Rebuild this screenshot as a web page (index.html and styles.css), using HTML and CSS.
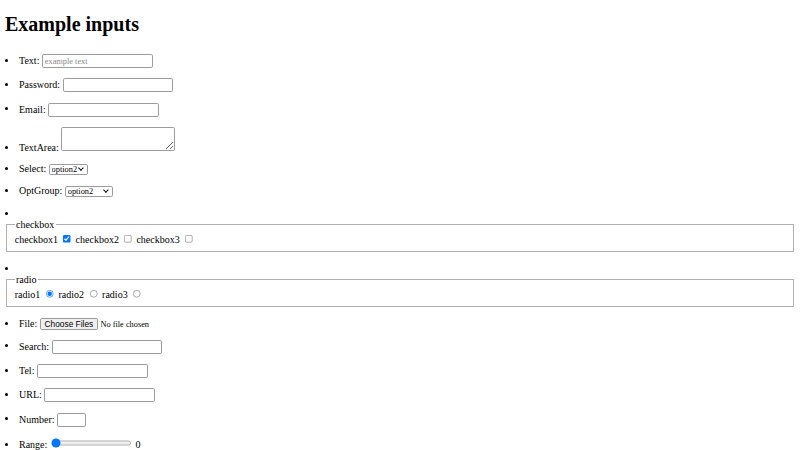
FILE: index.html
```html
<!DOCTYPE html>
<html lang="en">
<head>
<meta charset="utf-8">
<title>Example inputs</title>
<link rel="stylesheet" href="styles.css">
</head>
<body>
<h1>Example inputs</h1>
<ul class="inputs">
  <li>Text: <input class="field" type="text" placeholder="example text"></li>
  <li>Password: <input class="field" type="password"></li>
  <li>Email: <input class="field" type="email"></li>
  <li>TextArea: <textarea class="area"></textarea></li>
  <li>Select: <span class="sel"><select class="pick"><option>option1</option><option selected>option2</option><option>option3</option></select></span></li>
  <li>OptGroup: <span class="sel"><select class="pick pick-group"><optgroup label="Group 1"><option>option1</option><option selected>option2</option></optgroup><optgroup label="Group 2"><option>option3</option></optgroup></select></span></li>
  <li><fieldset class="group"><legend>checkbox</legend>checkbox1 <input type="checkbox" checked> checkbox2 <input type="checkbox"> checkbox3 <input type="checkbox"></fieldset></li>
  <li><fieldset class="group"><legend>radio</legend>radio1 <input type="radio" name="r" checked> radio2 <input type="radio" name="r"> radio3 <input type="radio" name="r"></fieldset></li>
  <li>File: <input class="file" type="file" multiple></li>
  <li>Search: <input class="field" type="search"></li>
  <li>Tel: <input class="field" type="tel"></li>
  <li>URL: <input class="field" type="url"></li>
  <li>Number: <input class="field num" type="number"></li>
  <li>Range: <input type="range" min="0" max="100" value="0"> <output>0</output></li>
</ul>
</body>
</html>
```
FILE: styles.css
```css
html {
  zoom: 0.625;
}
body {
  margin: 0 8px 8px;
  font-family: "Liberation Serif", serif;
  font-size: 16px;
  color: #000;
  background: #fff;
}
h1 {
  font-size: 32px;
  margin: 21.44px 0 28.5px;
}
.inputs {
  margin: 0;
  padding-left: 0;
  list-style-position: inside;
}
.inputs li {
  margin: 16.4px 0;
}
input, select, textarea, output {
  font-family: "Liberation Serif", serif;
  font-size: 13.333px;
}
output {
  font-size: 16px;
}
.field {
  box-sizing: border-box;
  width: 177px;
  height: 22.4px;
  padding: 1px 3px;
  border: 1.6px solid #9c9c9c;
  border-radius: 3px;
  background: #fff;
}
.field::placeholder {
  color: #8a8a8a;
}
.num {
  width: 46.4px;
}
.area {
  box-sizing: border-box;
  width: 182px;
  height: 38.4px;
  border: 1.6px solid #9c9c9c;
  border-radius: 3px;
}
.sel {
  position: relative;
  display: inline-block;
}
.sel::after {
  content: "";
  position: absolute;
  right: 8px;
  top: 4.5px;
  width: 4.5px;
  height: 4.5px;
  border-right: 2.4px solid #000;
  border-bottom: 2.4px solid #000;
  transform: rotate(45deg);
  pointer-events: none;
}
.pick {
  appearance: none;
  box-sizing: border-box;
  width: 62.4px;
  height: 17.6px;
  padding: 0 14px 0 3px;
  border: 1.6px solid #9c9c9c;
  border-radius: 3px;
  background-color: #fff;
  color: #000;
  vertical-align: baseline;
}
.pick-group {
  width: 76.8px;
}
.file::file-selector-button {
  font-family: "Liberation Sans", sans-serif;
  font-size: 13.333px;
  height: 19.2px;
  padding: 0 6px;
  margin-right: 4px;
  border: 1.6px solid #9c9c9c;
  border-radius: 3px;
  background: #efefef;
  color: #000;
}
.group {
  margin: 0 2px;
  border: 1.6px solid #b0b0b0;
}
```
